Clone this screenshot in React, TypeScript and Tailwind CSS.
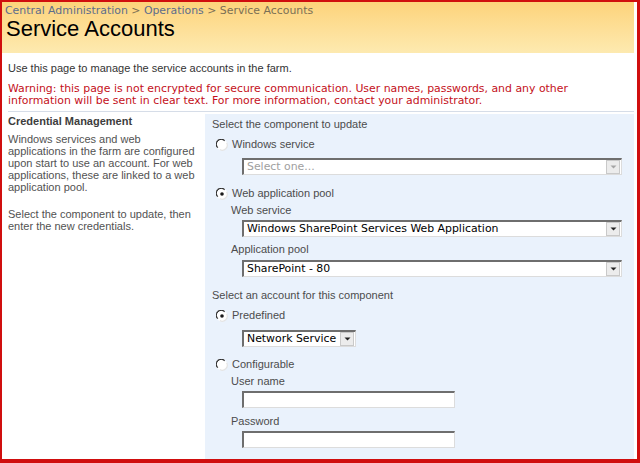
import React from 'react';

const verdana = 'font-["DejaVu_Sans",Verdana,sans-serif]';
const tahoma = 'font-["Liberation_Sans",Tahoma,sans-serif]';

function Radio({ checked }: { checked?: boolean }) {
  return (
    <svg width="12" height="12" viewBox="0 0 12 12" className="shrink-0">
      <circle cx="6" cy="6" r="5.5" fill="#ffffff" />
      <path d="M1.2 8.2 A5 5 0 0 1 8.2 1.2" fill="none" stroke="#6f6f6f" strokeWidth="1.3" />
      <path d="M1.8 8.8 A4.2 4.2 0 0 1 8.8 1.8" fill="none" stroke="#2f2f2f" strokeWidth="1" />
      <path d="M10.6 3.8 A5 5 0 0 1 3.8 10.6" fill="none" stroke="#e4e4e4" strokeWidth="1.2" />
      {checked && <circle cx="6" cy="6" r="1.8" fill="#1a1a1a" />}
    </svg>
  );
}

function Arrow({ disabled }: { disabled?: boolean }) {
  return (
    <div className="flex h-[14px] w-[14px] items-center justify-center border border-[#c9c9c9] bg-[#ececec]">
      <svg width="7" height="4" viewBox="0 0 7 4">
        <path d="M0.5 0.5 H6.5 L3.5 3.5 Z" fill={disabled ? '#a5a5a5' : '#222222'} />
      </svg>
    </div>
  );
}

function SelectBox({ value, width, disabled }: { value: string; width: string; disabled?: boolean }) {
  return (
    <div
      className={`flex h-[17px] items-center justify-between border-t-2 border-l-2 border-r border-b border-t-[#6e6e6e] border-l-[#6e6e6e] border-r-[#dcdcdc] border-b-[#dcdcdc] bg-white pl-[3px] pr-[1px] ${width}`}
    >
      <span className={`${verdana} text-[10.9px] leading-none ${disabled ? 'text-[#a0a0a0]' : 'text-black'}`}>
        {value}
      </span>
      <Arrow disabled={disabled} />
    </div>
  );
}

function TextBox() {
  return (
    <div className="h-[17px] w-[213px] border-t-2 border-l-2 border-r border-b border-t-[#6e6e6e] border-l-[#6e6e6e] border-r-[#dcdcdc] border-b-[#dcdcdc] bg-white" />
  );
}

function RadioRow({ label, checked }: { label: string; checked?: boolean }) {
  return (
    <div className="flex items-center gap-[4px] pl-[4px]">
      <Radio checked={checked} />
      <span className="text-[11px] leading-[13px] text-[#4c4c4c]">{label}</span>
    </div>
  );
}

export default function App() {
  return (
    <div className="h-[463px] w-[640px] overflow-hidden bg-[#d00e0e] pb-[4px] pl-[2px] pr-[3px] pt-[2px]">
      <div className="flex h-full flex-col bg-white pr-[3px]">
        {/* Header */}
        <div className="h-[51px] shrink-0 bg-gradient-to-b from-[#fdd37a] to-[#fdeab0] pl-[3px] pt-[2px]">
          <div className={`${verdana} text-[10.9px] leading-[13px]`}>
            <span className="text-[#5c6d8c]">Central Administration</span>
            <span className="text-[#7a6f55]"> &gt; </span>
            <span className="text-[#5c6d8c]">Operations</span>
            <span className="text-[#7a6f55]"> &gt; Service Accounts</span>
          </div>
          <div className={`${tahoma} ml-[1px] text-[22px] leading-[24px] text-black`}>Service Accounts</div>
        </div>

        {/* Description */}
        <div className={`${tahoma} px-[6px] pt-[9px] text-[11px] leading-[13px] text-[#333333]`}>
          Use this page to manage the service accounts in the farm.
        </div>
        <div className={`${verdana} px-[6px] pt-[8px] text-[10.9px] leading-[12px] text-[#c4101a]`}>
          Warning: this page is not encrypted for secure communication. User names, passwords, and any other
          <br />
          information will be sent in clear text. For more information, contact your administrator.
        </div>

        <div className="ml-[6px] mt-[4px] border-t border-[#d6dde8]" />

        {/* Body */}
        <div className={`${tahoma} mt-[2px] flex flex-1 pl-[6px]`}>
          <div className="w-[197px] shrink-0 pr-[6px] pt-[1px] text-[11px] leading-[12px] text-[#525252]">
            <div className="font-bold text-[#3d3d3d]">Credential Management</div>
            <div className="mt-[6px]">
              Windows services and web applications in the farm are configured upon start to use an account. For web
              applications, these are linked to a web application pool.
            </div>
            <div className="mt-[15px]">Select the component to update, then enter the new credentials.</div>
          </div>

          <div className="flex flex-1 flex-col bg-[#eaf2fc] pl-[7px] pt-[4px] text-[11px] leading-[13px] text-[#4c4c4c]">
            <div>Select the component to update</div>
            <div className="mt-[7px]">
              <RadioRow label="Windows service" />
            </div>
            <div className="mt-[7px] pl-[30px]">
              <SelectBox value="Select one..." width="w-[380px]" disabled />
            </div>
            <div className="mt-[12px]">
              <RadioRow label="Web application pool" checked />
            </div>
            <div className="mt-[4px] pl-[19px]">Web service</div>
            <div className="mt-[3px] pl-[30px]">
              <SelectBox value="Windows SharePoint Services Web Application" width="w-[380px]" />
            </div>
            <div className="mt-[6px] pl-[19px]">Application pool</div>
            <div className="mt-[4px] pl-[30px]">
              <SelectBox value="SharePoint - 80" width="w-[380px]" />
            </div>
            <div className="mt-[12px]">Select an account for this component</div>
            <div className="mt-[7px]">
              <RadioRow label="Predefined" checked />
            </div>
            <div className="mt-[8px] pl-[30px]">
              <SelectBox value="Network Service" width="w-[114px]" />
            </div>
            <div className="mt-[11px]">
              <RadioRow label="Configurable" />
            </div>
            <div className="mt-[4px] pl-[19px]">User name</div>
            <div className="mt-[3px] pl-[30px]">
              <TextBox />
            </div>
            <div className="mt-[7px] pl-[19px]">Password</div>
            <div className="mt-[3px] pl-[30px]">
              <TextBox />
            </div>
          </div>
        </div>
      </div>
    </div>
  );
}
